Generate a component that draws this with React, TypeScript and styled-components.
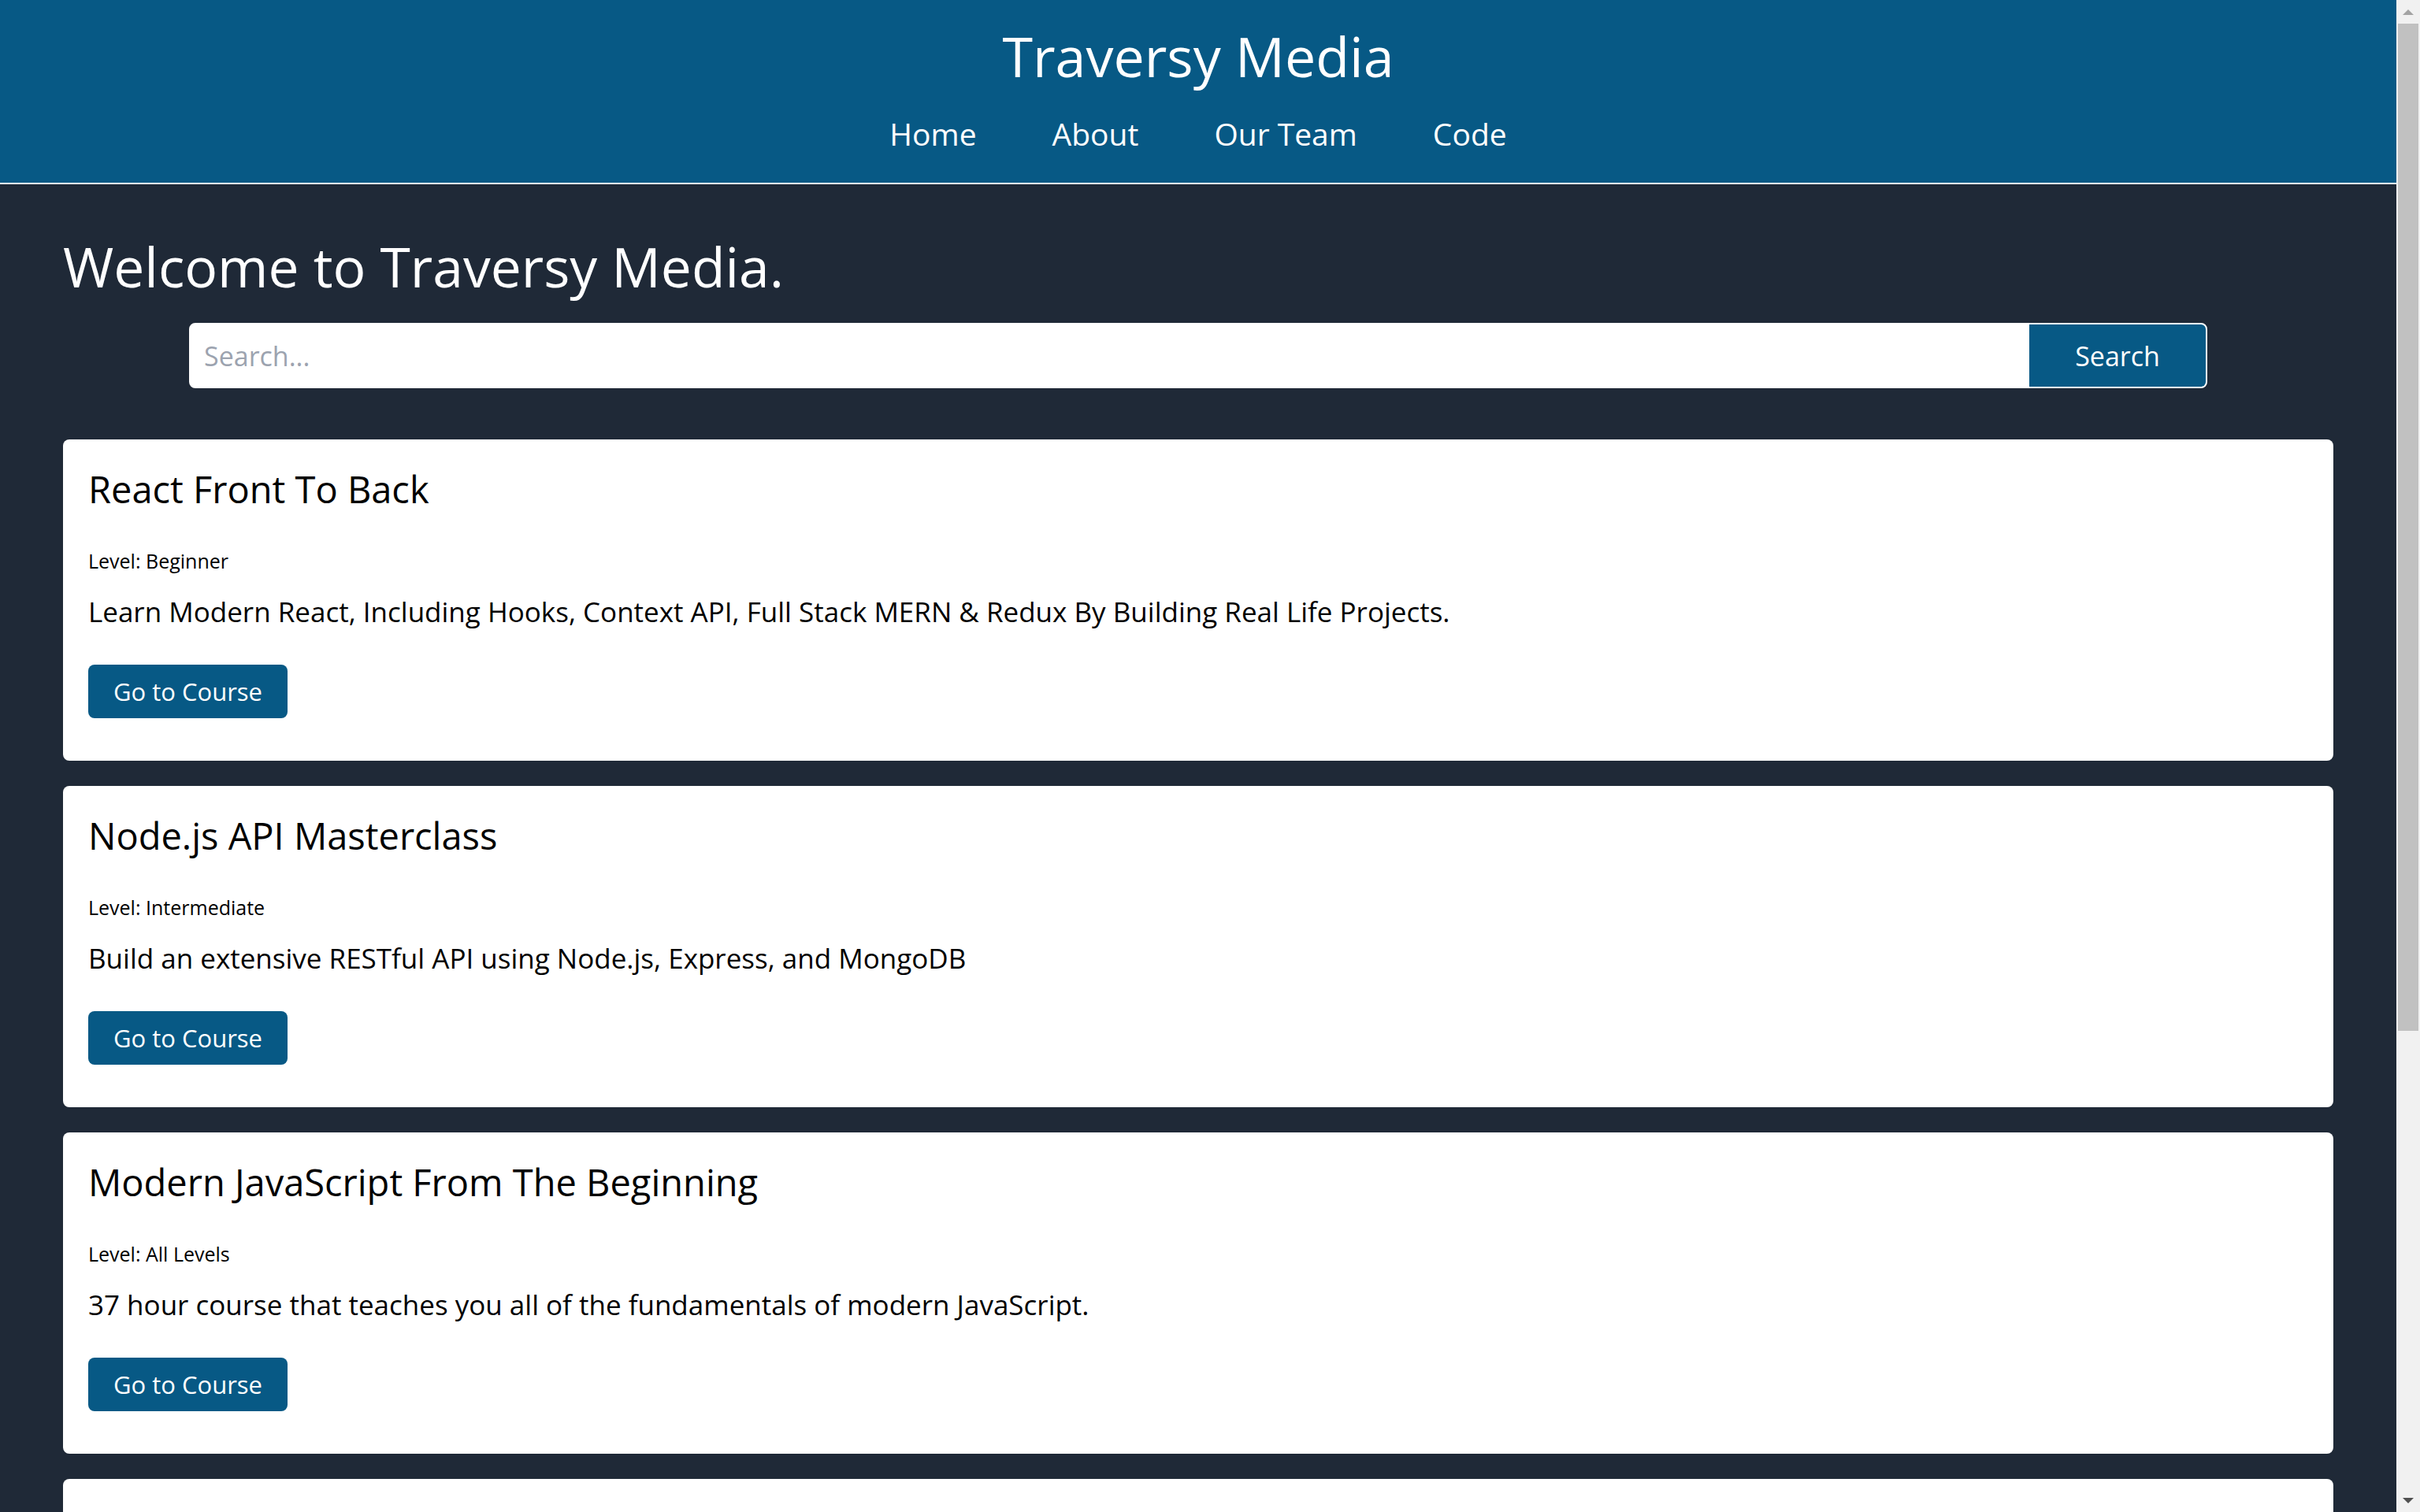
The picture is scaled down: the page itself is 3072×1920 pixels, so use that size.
import React from "react";
import styled, { createGlobalStyle } from "styled-components";

const GlobalStyle = createGlobalStyle`
  html, body {
    margin: 0;
    padding: 0;
    background: #1f2937;
    font-family: "Open Sans", "Noto Sans", sans-serif;
  }
  * { box-sizing: border-box; }
`;

const Page = styled.div`
  margin-right: 30px;
`;

const Header = styled.header`
  background: #075985;
  border-bottom: 2px solid #ffffff;
  padding: 23px 0 34px;
  display: flex;
  flex-direction: column;
  align-items: center;
  gap: 23px;
`;

const Brand = styled.h1`
  margin: 0;
  font-size: 70px;
  line-height: 96px;
  font-weight: 400;
  color: #ffffff;
`;

const Nav = styled.nav`
  display: flex;
  gap: 96px;
`;

const NavLink = styled.a`
  font-size: 39px;
  line-height: 56px;
  color: #ffffff;
  text-decoration: none;
`;

const Main = styled.main`
  padding: 64px 80px 66px;
  display: flex;
  flex-direction: column;
`;

const Heading = styled.h2`
  margin: 0;
  font-size: 69.6px;
  line-height: 80px;
  font-weight: 400;
  color: #ffffff;
`;

const SearchForm = styled.form`
  margin: 32px 160px 0;
  height: 83px;
  display: flex;
  background: #ffffff;
  border: 2px solid #ffffff;
  border-radius: 8px;
`;

const SearchInput = styled.input`
  flex: 1;
  border: none;
  outline: none;
  background: transparent;
  padding: 0 17px;
  font-family: inherit;
  font-size: 34px;
  color: #111827;
  &::placeholder { color: #9ca3af; }
`;

const SearchButton = styled.button`
  width: 224px;
  border: none;
  background: #075985;
  color: #ffffff;
  font-family: inherit;
  font-size: 34px;
  border-radius: 0 6px 6px 0;
  cursor: pointer;
`;

const CardList = styled.section`
  margin-top: 65px;
  display: flex;
  flex-direction: column;
  gap: 32px;
`;

const Card = styled.article`
  background: #ffffff;
  border-radius: 8px;
  padding: 33px 32px 54px;
  display: flex;
  flex-direction: column;
  align-items: flex-start;
`;

const CardTitle = styled.h3`
  margin: 0;
  font-size: 47px;
  line-height: 60px;
  font-weight: 400;
  color: #000000;
`;

const Level = styled.p`
  margin: 43px 0 0;
  font-size: 25px;
  line-height: 36px;
  color: #000000;
`;

const Description = styled.p`
  margin: 23px 0 0;
  font-size: 35px;
  line-height: 48px;
  color: #000000;
`;

const CourseButton = styled.a`
  margin-top: 43px;
  display: inline-block;
  height: 68px;
  padding: 0 32px;
  line-height: 68px;
  font-size: 31px;
  background: #075985;
  color: #ffffff;
  border-radius: 8px;
  text-decoration: none;
`;

/* browser-style vertical scrollbar drawn over the right edge */
const ScrollRail = styled.div`
  position: fixed;
  top: 0;
  right: 0;
  width: 30px;
  height: 100vh;
  background: #f1f1f1;
  display: flex;
  flex-direction: column;
`;

const ScrollArrow = styled.div<{ $dir: "up" | "down" }>`
  height: 30px;
  flex: none;
  display: flex;
  align-items: center;
  justify-content: center;
  &::after {
    content: "";
    width: 0;
    height: 0;
    border-left: 7px solid transparent;
    border-right: 7px solid transparent;
    ${(p) =>
      p.$dir === "up"
        ? "border-bottom: 7px solid #a3a3a3;"
        : "border-top: 7px solid #505050;"}
  }
`;

const ScrollThumb = styled.div`
  height: 1279px;
  margin: 0 2px;
  background: #c1c1c1;
  flex: none;
`;

const ScrollSpace = styled.div`
  flex: 1;
`;

const courses = [
  {
    title: "React Front To Back",
    level: "Beginner",
    description:
      "Learn Modern React, Including Hooks, Context API, Full Stack MERN & Redux By Building Real Life Projects.",
  },
  {
    title: "Node.js API Masterclass",
    level: "Intermediate",
    description: "Build an extensive RESTful API using Node.js, Express, and MongoDB",
  },
  {
    title: "Modern JavaScript From The Beginning",
    level: "All Levels",
    description: "37 hour course that teaches you all of the fundamentals of modern JavaScript.",
  },
  {
    title: "Python Django Dev To Deployment",
    level: "Intermediate",
    description: "Build a real estate application with Django, Postgres & deploy to a Linux server.",
  },
  {
    title: "50 Projects In 50 Days",
    level: "Beginner",
    description: "Sharpen your skills by building 50 quick, unique & fun mini projects.",
  },
];

export default function App() {
  return (
    <>
      <GlobalStyle />
      <Page>
        <Header>
          <Brand>Traversy Media</Brand>
          <Nav>
            <NavLink href="#">Home</NavLink>
            <NavLink href="#">About</NavLink>
            <NavLink href="#">Our Team</NavLink>
            <NavLink href="#">Code</NavLink>
          </Nav>
        </Header>
        <Main>
          <Heading>Welcome to Traversy Media.</Heading>
          <SearchForm onSubmit={(e) => e.preventDefault()}>
            <SearchInput type="text" placeholder="Search..." />
            <SearchButton type="submit">Search</SearchButton>
          </SearchForm>
          <CardList>
            {courses.map((c) => (
              <Card key={c.title}>
                <CardTitle>{c.title}</CardTitle>
                <Level>Level: {c.level}</Level>
                <Description>{c.description}</Description>
                <CourseButton href="#">Go to Course</CourseButton>
              </Card>
            ))}
          </CardList>
        </Main>
      </Page>
      <ScrollRail aria-hidden="true">
        <ScrollArrow $dir="up" />
        <ScrollThumb />
        <ScrollSpace />
        <ScrollArrow $dir="down" />
      </ScrollRail>
    </>
  );
}
